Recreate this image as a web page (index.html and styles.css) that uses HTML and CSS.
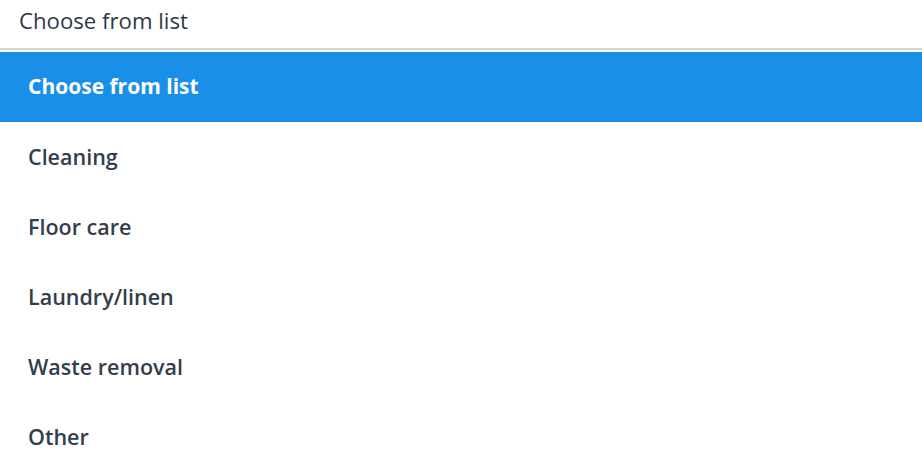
FILE: index.html
```html
<!DOCTYPE html>
<html lang="en">
<head>
<meta charset="utf-8">
<title>Choose from list</title>
<link rel="stylesheet" href="styles.css">
</head>
<body>
<div class="select">
  <div class="select-value">Choose from list</div>
  <ul class="options">
    <li class="option selected">Choose from list</li>
    <li class="option">Cleaning</li>
    <li class="option">Floor care</li>
    <li class="option">Laundry/linen</li>
    <li class="option">Waste removal</li>
    <li class="option">Other</li>
  </ul>
</div>
</body>
</html>
```
FILE: styles.css
```css
html, body {
  margin: 0;
  padding: 0;
  background: #ffffff;
}
body {
  font-family: "Open Sans", "Liberation Sans", sans-serif;
  color: #333d4c;
  overflow: hidden;
}
.select-value {
  box-sizing: border-box;
  height: 50px;
  padding: 0 19px 8px;
  display: flex;
  align-items: center;
  font-size: 22.2px;
  font-weight: 500;
  color: #2f3848;
  border-bottom: 2px solid #d6d6d6;
}
.options {
  list-style: none;
  margin: 2px 0 0;
  padding: 0;
}
.option {
  box-sizing: border-box;
  height: 70px;
  display: flex;
  align-items: center;
  padding: 0 0 2px 28px;
  font-size: 21.5px;
  font-weight: 600;
  color: #333d4c;
}
.option.selected {
  background: #1a8fe8;
  color: #ffffff;
  font-size: 21px;
  font-weight: 700;
}
```
